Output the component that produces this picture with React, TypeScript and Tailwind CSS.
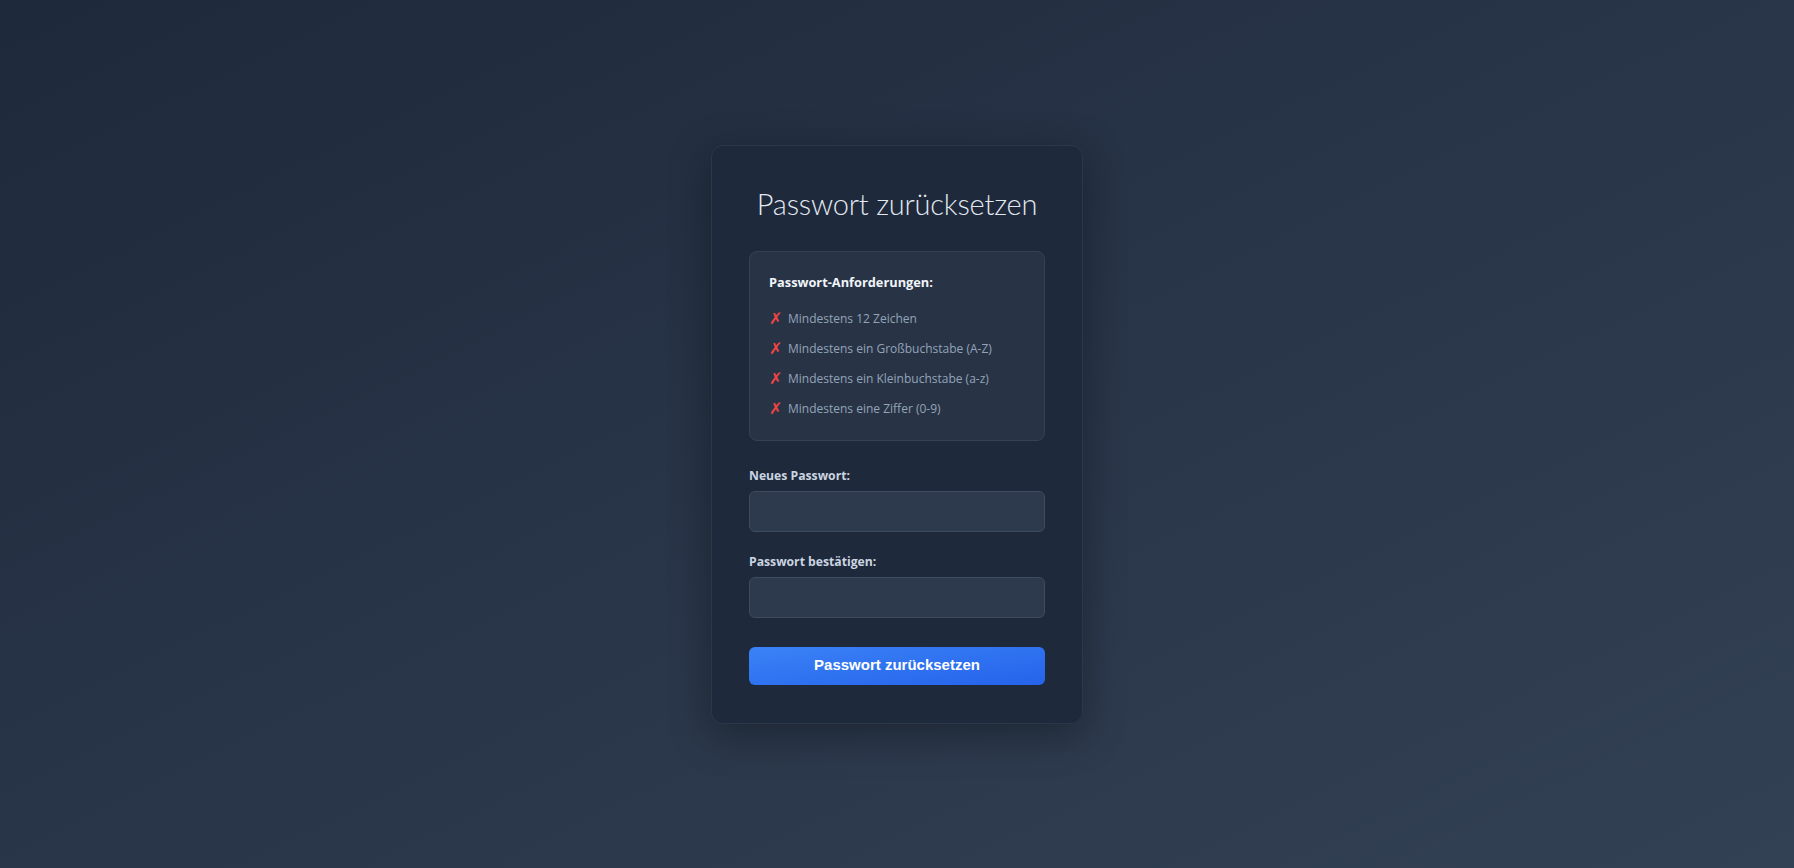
const requirements = [
  'Mindestens 12 Zeichen',
  'Mindestens ein Großbuchstabe (A-Z)',
  'Mindestens ein Kleinbuchstabe (a-z)',
  'Mindestens eine Ziffer (0-9)',
]

export default function App() {
  return (
    <div className="min-h-screen w-full flex items-center justify-center bg-gradient-to-br from-[#1e293b] to-[#334155] font-['Open_Sans',sans-serif]">
      <div className="w-[372px] rounded-xl border border-[#2c3749] bg-[#1e293b] px-[37px] pt-[39px] pb-[38px] shadow-[0_10px_40px_rgba(0,0,0,0.35)]">
        <h2 className="whitespace-nowrap text-center text-[29px] leading-[38px] tracking-[-0.2px] font-light text-[#e2e8f0] mb-[28px] font-['Lato',sans-serif]">
          Passwort zurücksetzen
        </h2>

        <div className="rounded-lg border border-[#354256] bg-[#283446] px-[19px] pt-[20px] pb-[21px]">
          <div className="text-[12.8px] leading-[21px] font-bold text-[#f1f5f9] mb-[16px]">
            Passwort-Anforderungen:
          </div>
          <ul className="flex flex-col gap-[10px]">
            {requirements.map((r) => (
              <li key={r} className="flex items-center h-[20px] text-[12px] text-[#94a3b8]">
                <span className="w-[19px] text-[#ef4444] text-[16px] font-['DejaVu_Sans',sans-serif]">✗</span>
                <span>{r}</span>
              </li>
            ))}
          </ul>
        </div>

        <div className="mt-[25px]">
          <label className="block text-[12.2px] leading-[20px] font-bold text-[#cbd5e1] mb-[5px]">
            Neues Passwort:
          </label>
          <input
            type="password"
            className="block w-full h-[41px] rounded-md border border-[#3e4b5f] bg-[#2d3a4d] px-3 text-[#e2e8f0] outline-none"
          />
        </div>

        <div className="mt-[20px]">
          <label className="block text-[12.2px] leading-[20px] font-bold text-[#cbd5e1] mb-[5px]">
            Passwort bestätigen:
          </label>
          <input
            type="password"
            className="block w-full h-[41px] rounded-md border border-[#3e4b5f] bg-[#2d3a4d] px-3 text-[#e2e8f0] outline-none"
          />
        </div>

        <button className="mt-[29px] w-full h-[38px] rounded-md bg-gradient-to-br from-[#3b82f6] to-[#2563eb] text-white text-[15px] font-bold font-['Liberation_Sans',Arial,sans-serif]">
          Passwort zurücksetzen
        </button>
      </div>
    </div>
  )
}
